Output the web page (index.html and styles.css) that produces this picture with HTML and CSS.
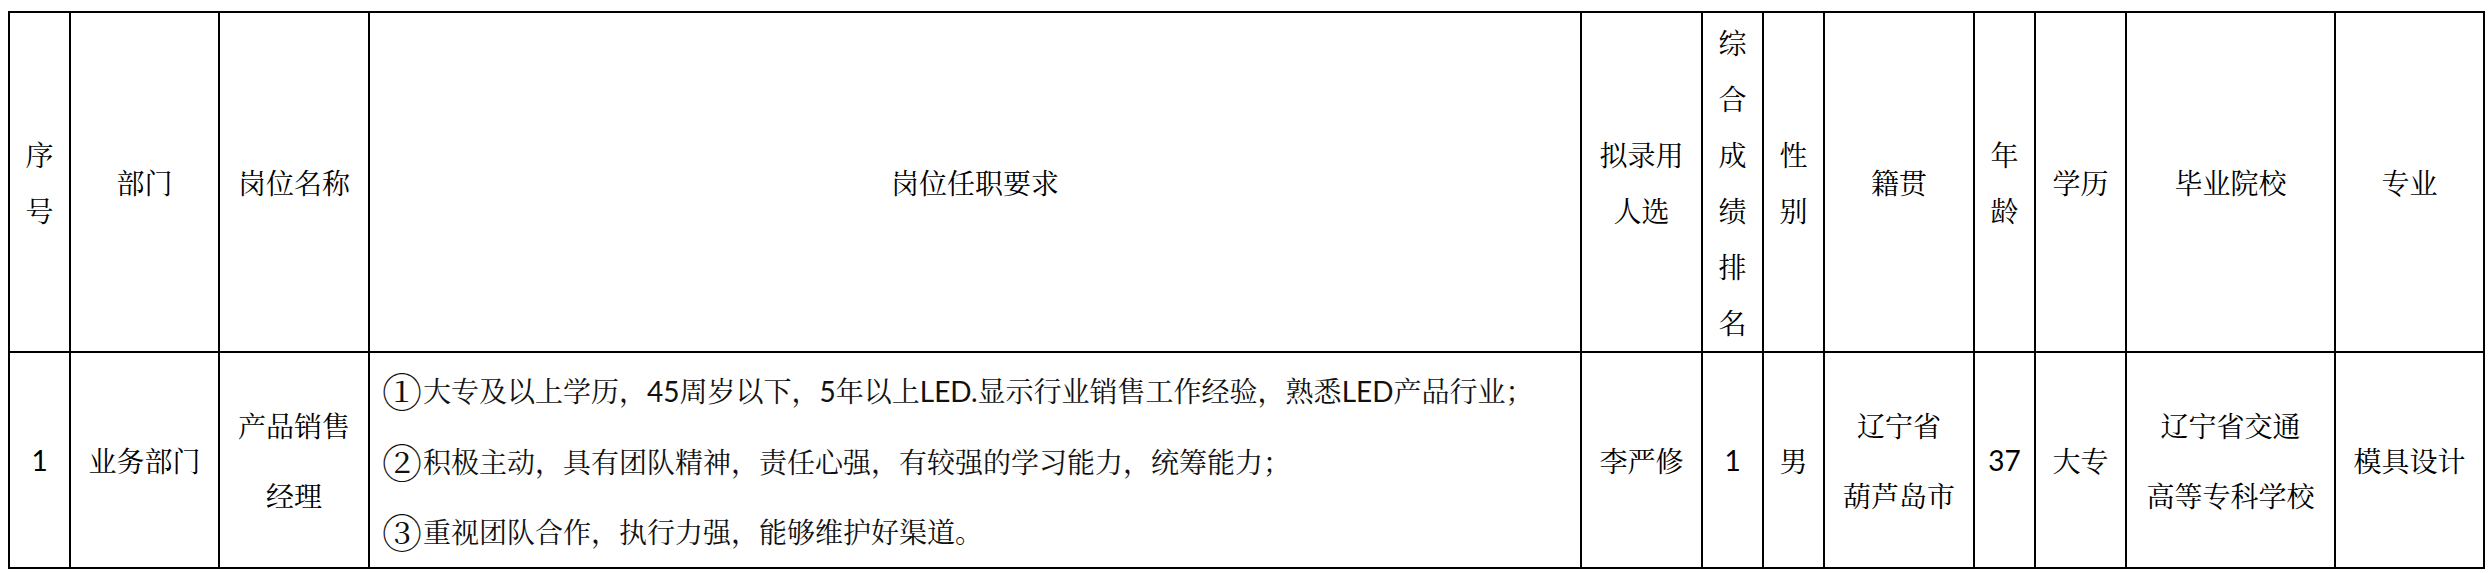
FILE: index.html
```html
<!DOCTYPE html>
<html lang="zh-CN">
<head>
<meta charset="utf-8">
<title>拟录用人员公示</title>
<link rel="stylesheet" href="styles.css">
</head>
<body>
<div class="wrap">
<table class="grid">
  <colgroup>
    <col class="c-no">
    <col class="c-dept">
    <col class="c-post">
    <col class="c-req">
    <col class="c-name">
    <col class="c-rank">
    <col class="c-sex">
    <col class="c-home">
    <col class="c-age">
    <col class="c-edu">
    <col class="c-school">
    <col class="c-major">
  </colgroup>
  <thead>
    <tr class="head">
      <th>序<br>号</th>
      <th>部门</th>
      <th>岗位名称</th>
      <th>岗位任职要求</th>
      <th>拟录用<br>人选</th>
      <th>综<br>合<br>成<br>绩<br>排<br>名</th>
      <th>性<br>别</th>
      <th>籍贯</th>
      <th>年<br>龄</th>
      <th>学历</th>
      <th>毕业院校</th>
      <th>专业</th>
    </tr>
  </thead>
  <tbody>
    <tr class="row">
      <td class="num">1</td>
      <td>业务部门</td>
      <td>产品销售<br>经理</td>
      <td class="req"><span class="circ">①</span>大专及以上学历，<span class="lat">45</span>周岁以下，<span class="lat">5</span>年以上<span class="lat">LED.</span>显示行业销售工作经验，熟悉<span class="lat">LED</span>产品行业；<br><span class="circ">②</span>积极主动，具有团队精神，责任心强，有较强的学习能力，统筹能力；<br><span class="circ">③</span>重视团队合作，执行力强，能够维护好渠道。</td>
      <td>李严修</td>
      <td class="num">1</td>
      <td>男</td>
      <td>辽宁省<br>葫芦岛市</td>
      <td class="num">37</td>
      <td>大专</td>
      <td>辽宁省交通<br>高等专科学校</td>
      <td>模具设计</td>
    </tr>
  </tbody>
</table>
</div>
</body>
</html>
```

FILE: styles.css
```css
html, body {
  margin: 0;
  padding: 0;
  background: #ffffff;
}

.wrap {
  padding: 11px 0 0 8px;
}

.grid {
  border-collapse: collapse;
  table-layout: fixed;
  width: 2477px;
  font-family: "Noto Serif CJK SC", "Noto Sans CJK SC", serif;
  color: #000000;
}

.c-no { width: 61px; }
.c-dept { width: 149px; }
.c-post { width: 150px; }
.c-req { width: 1212px; }
.c-name { width: 121px; }
.c-rank { width: 61px; }
.c-sex { width: 61px; }
.c-home { width: 150px; }
.c-age { width: 61px; }
.c-edu { width: 91px; }
.c-school { width: 209px; }
.c-major { width: 149px; }

.grid th,
.grid td {
  border: 2px solid #000000;
  padding: 0 8px;
  text-align: center;
  vertical-align: middle;
  overflow: hidden;
}

.head th {
  height: 338px;
  font-size: 28px;
  line-height: 56px;
  font-weight: normal;
}

.row td {
  height: 214px;
  font-size: 28px;
  line-height: 70px;
}

.row td.req {
  text-align: left;
  padding-left: 12px;
  white-space: nowrap;
  color: #111111;
}

.circ {
  display: inline-block;
  font-size: 40px;
  line-height: 40px;
  vertical-align: -5px;
  margin-right: 1px;
}

.lat,
.num {
  font-family: "Lato", "Open Sans", sans-serif;
}
```
